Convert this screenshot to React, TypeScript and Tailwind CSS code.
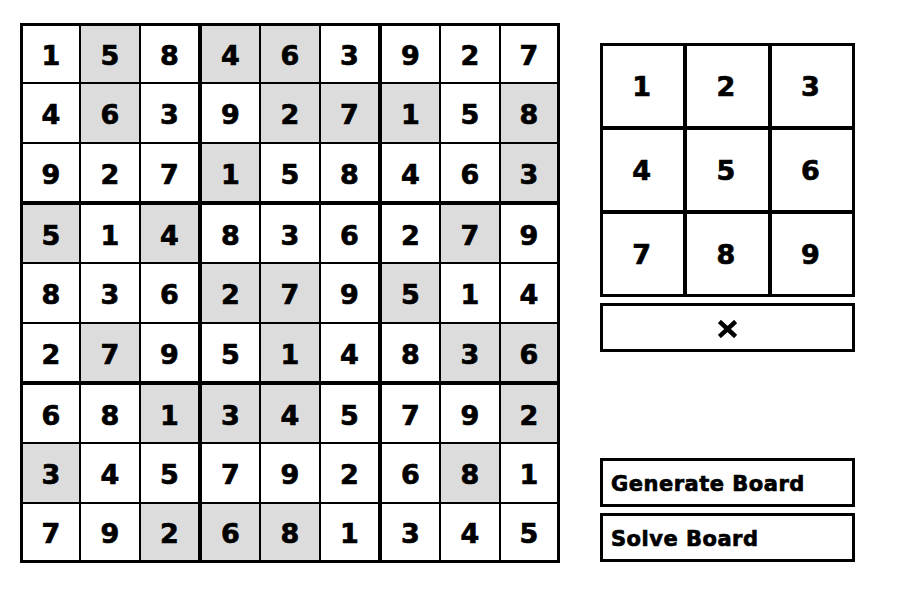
import React from "react";

const board = [
  [1, 5, 8, 4, 6, 3, 9, 2, 7],
  [4, 6, 3, 9, 2, 7, 1, 5, 8],
  [9, 2, 7, 1, 5, 8, 4, 6, 3],
  [5, 1, 4, 8, 3, 6, 2, 7, 9],
  [8, 3, 6, 2, 7, 9, 5, 1, 4],
  [2, 7, 9, 5, 1, 4, 8, 3, 6],
  [6, 8, 1, 3, 4, 5, 7, 9, 2],
  [3, 4, 5, 7, 9, 2, 6, 8, 1],
  [7, 9, 2, 6, 8, 1, 3, 4, 5],
];

// cells given at start (shown grey)
const given = [
  [0, 1, 0, 1, 1, 0, 0, 0, 0],
  [0, 1, 0, 0, 1, 1, 1, 0, 1],
  [0, 0, 0, 1, 0, 0, 0, 0, 1],
  [1, 0, 1, 0, 0, 0, 0, 1, 0],
  [0, 0, 0, 1, 1, 0, 1, 0, 0],
  [0, 1, 0, 0, 1, 0, 0, 1, 1],
  [0, 0, 1, 1, 1, 0, 0, 0, 1],
  [1, 0, 0, 0, 0, 0, 0, 1, 0],
  [0, 0, 1, 1, 1, 0, 0, 0, 0],
];

const font = "font-['DejaVu_Sans',sans-serif] font-bold [-webkit-text-stroke:0.7px_black]";

function Cell({ r, c, value }: { r: number; c: number; value: number }) {
  const left = c === 0 ? "border-l-[3px]" : c % 3 === 0 ? "border-l-2" : "border-l";
  const right = c === 8 ? "border-r-[3px]" : c % 3 === 2 ? "border-r-2" : "border-r";
  const top = r === 0 ? "border-t-[3px]" : r % 3 === 0 ? "border-t-2" : "border-t";
  const bottom = r === 8 ? "border-b-[3px]" : r % 3 === 2 ? "border-b-2" : "border-b";
  const bg = given[r][c] ? "bg-[#dcdcdc]" : "bg-white";
  return (
    <div
      className={`w-[60px] h-[60px] pt-[5px] flex items-center justify-center border-black text-[27px] text-black ${left} ${right} ${top} ${bottom} ${bg}`}
    >
      {value}
    </div>
  );
}

export default function App() {
  return (
    <div className={`w-[900px] h-[603px] bg-white flex pl-[20px] pt-[23px] ${font}`}>
      <div className="grid grid-cols-9 w-[540px] h-[540px]">
        {board.map((row, r) =>
          row.map((v, c) => <Cell key={`${r}-${c}`} r={r} c={c} value={v} />)
        )}
      </div>

      <div className="ml-[40px] w-[255px] h-[539px] pt-[20px] flex flex-col">
        <div className="grid grid-cols-3 border border-black">
          {[1, 2, 3, 4, 5, 6, 7, 8, 9].map((n) => (
            <button
              key={n}
              className="h-[84px] pt-[2px] pr-[3px] border-2 border-black bg-white text-[27px] text-black flex items-center justify-center"
            >
              {n}
            </button>
          ))}
        </div>

        <button className="mt-[6px] h-[49px] pt-[3px] border-[3px] border-black bg-white flex items-center justify-center">
          <svg width="19" height="18" viewBox="0 0 19 18">
            <path d="M3 3 L16 15 M16 3 L3 15" stroke="black" strokeWidth="4.5" strokeLinecap="square" />
          </svg>
        </button>

        <div className="flex-1" />

        <button className="h-[49px] pt-[4px] border-[3px] border-black bg-white text-left pl-[8px] text-[21px] tracking-[0.5px] text-black">
          Generate Board
        </button>
        <button className="mt-[6px] h-[49px] pt-[4px] border-[3px] border-black bg-white text-left pl-[8px] text-[21px] tracking-[0.5px] text-black">
          Solve Board
        </button>
      </div>
    </div>
  );
}
